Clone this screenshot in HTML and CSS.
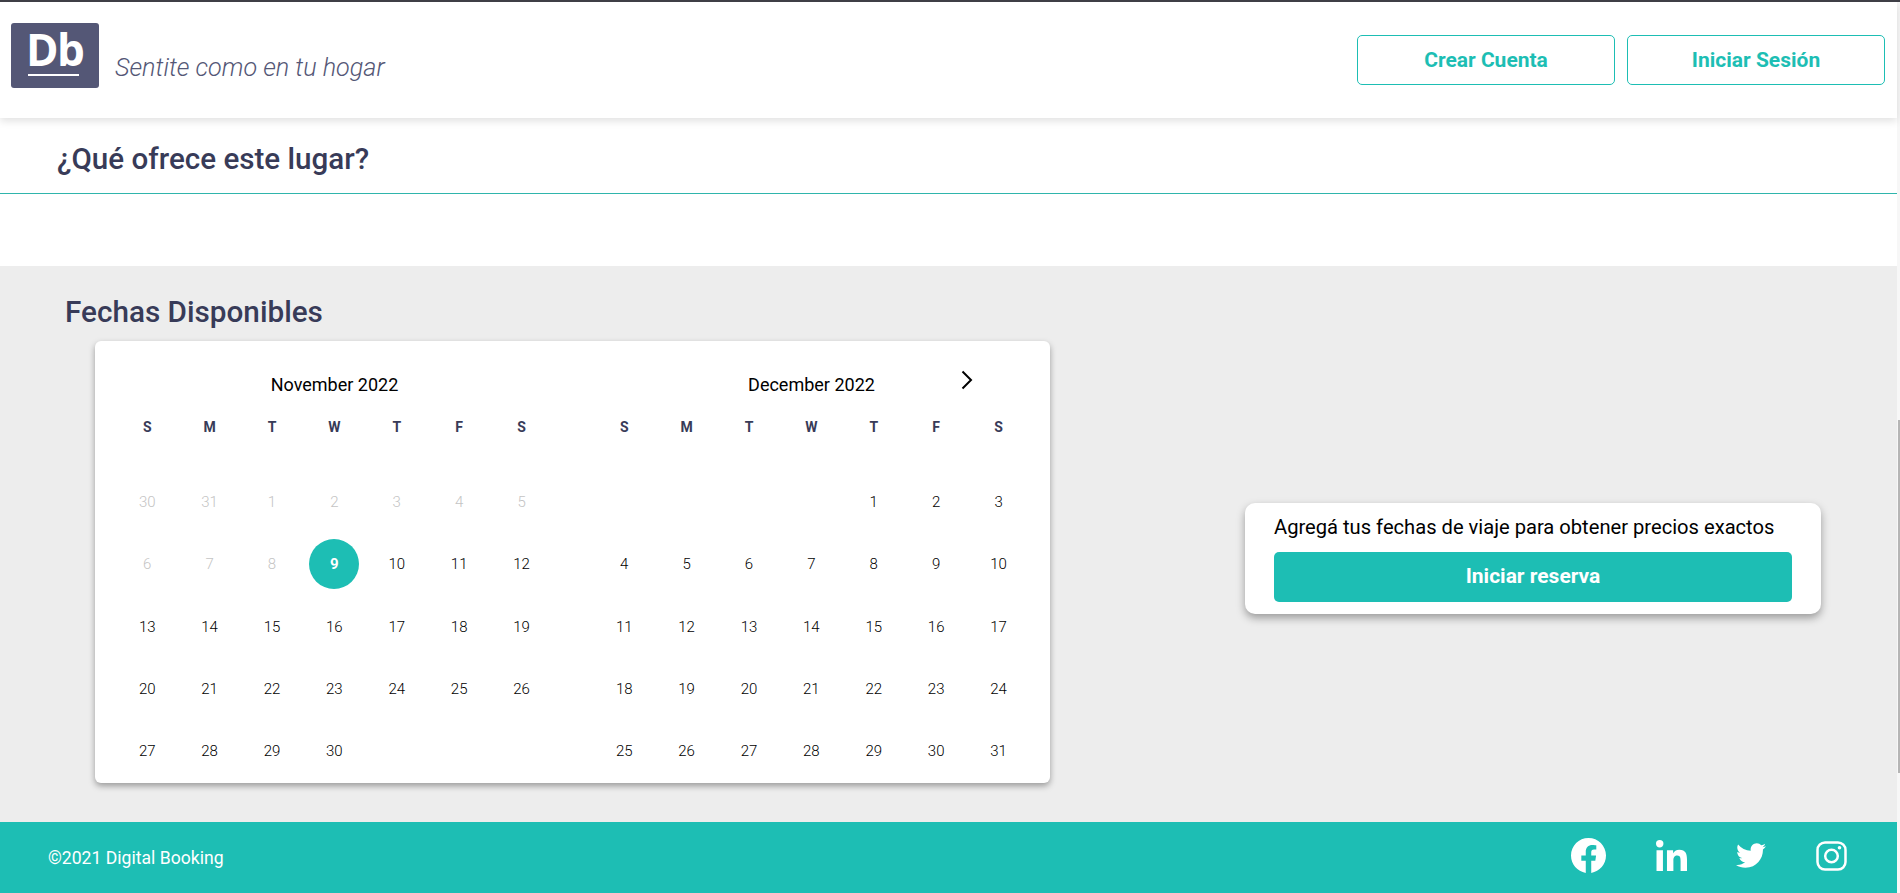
FILE: index.html
```html
<!DOCTYPE html>
<html lang="en">
<head>
    <meta charset="UTF-8">
    <meta name="viewport" content="width=device-width, initial-scale=1.0">
    <title>Digital Booking</title>
    <link rel="stylesheet" href="styles.css">
</head>
<body>
    <div class="page">
        <div class="content">
            <header class="header">
                <div class="brand">
                    <div class="logo"><span class="logo-text">Db</span></div>
                    <span class="tagline">Sentite como en tu hogar</span>
                </div>
                <div class="header-buttons">
                    <button type="button" class="btn-outline">Crear Cuenta</button>
                    <button type="button" class="btn-outline">Iniciar Sesión</button>
                </div>
            </header>

            <section class="features">
                <h2 class="features-title">¿Qué ofrece este lugar?</h2>
                <div class="features-body"></div>
            </section>

            <section class="dates">
                <h2 class="dates-title">Fechas Disponibles</h2>
                <div class="dates-row">
                    <div class="calendar">
                        <svg class="next-month" viewBox="0 0 12 20" aria-hidden="true"><path d="M1.500 1.500 10 10l-8.500 8.500" /></svg>
                        <div class="month">
                            <div class="month-name">November 2022</div>
                            <div class="week-days">
                                <span>S</span><span>M</span><span>T</span><span>W</span><span>T</span><span>F</span><span>S</span>
                            </div>
                            <div class="days">
                                <span class="off">30</span><span class="off">31</span><span class="off">1</span><span class="off">2</span><span class="off">3</span><span class="off">4</span><span class="off">5</span>
                                <span class="off">6</span><span class="off">7</span><span class="off">8</span><span class="today">9</span><span>10</span><span>11</span><span>12</span>
                                <span>13</span><span>14</span><span>15</span><span>16</span><span>17</span><span>18</span><span>19</span>
                                <span>20</span><span>21</span><span>22</span><span>23</span><span>24</span><span>25</span><span>26</span>
                                <span>27</span><span>28</span><span>29</span><span>30</span><span></span><span></span><span></span>
                            </div>
                        </div>
                        <div class="month">
                            <div class="month-name">December 2022</div>
                            <div class="week-days">
                                <span>S</span><span>M</span><span>T</span><span>W</span><span>T</span><span>F</span><span>S</span>
                            </div>
                            <div class="days">
                                <span></span><span></span><span></span><span></span><span>1</span><span>2</span><span>3</span>
                                <span>4</span><span>5</span><span>6</span><span>7</span><span>8</span><span>9</span><span>10</span>
                                <span>11</span><span>12</span><span>13</span><span>14</span><span>15</span><span>16</span><span>17</span>
                                <span>18</span><span>19</span><span>20</span><span>21</span><span>22</span><span>23</span><span>24</span>
                                <span>25</span><span>26</span><span>27</span><span>28</span><span>29</span><span>30</span><span>31</span>
                            </div>
                        </div>
                    </div>
                    <div class="booking">
                        <p class="booking-text">Agregá tus fechas de viaje para obtener precios exactos</p>
                        <button type="button" class="btn-solid">Iniciar reserva</button>
                    </div>
                </div>
            </section>

            <footer class="footer">
                <span class="copyright">©2021 Digital Booking</span>
                <div class="social">
                    <svg class="icon-facebook" viewBox="8 8 496 493" aria-hidden="true"><path d="M504 256C504 119 393 8 256 8S8 119 8 256c0 123.78 90.69 226.38 209.25 245V327.69h-63V256h63v-54.64c0-62.15 37-96.48 93.67-96.48 27.14 0 55.52 4.84 55.52 4.84v61h-31.28c-30.8 0-40.41 19.12-40.41 38.73V256h68.78l-11 71.69h-57.78V501C413.31 482.38 504 379.78 504 256z" /></svg>
                    <svg class="icon-linkedin" viewBox="0 0 448 448" aria-hidden="true"><path d="M100.28 448H7.4V148.9h92.88zM53.79 108.1C24.09 108.1 0 83.5 0 53.8a53.79 53.79 0 0 1 107.58 0c0 29.7-24.1 54.3-53.79 54.3zM447.9 448h-92.68V302.4c0-34.7-.7-79.2-48.29-79.2-48.29 0-55.69 37.7-55.69 76.7V448h-92.78V148.9h89.08v40.8h1.3c12.4-23.5 42.69-48.3 87.88-48.3 94 0 111.28 61.9 111.28 142.3V448z" /></svg>
                    <svg class="icon-twitter" viewBox="0 48 512 416" aria-hidden="true"><path d="M459.37 151.716c.325 4.548.325 9.097.325 13.645 0 138.72-105.583 298.558-298.558 298.558-59.452 0-114.68-17.219-161.137-47.106 8.447.974 16.568 1.299 25.34 1.299 49.055 0 94.213-16.568 130.274-44.832-46.132-.975-84.792-31.188-98.112-72.772 6.498.974 12.995 1.624 19.818 1.624 9.421 0 18.843-1.3 27.614-3.573-48.081-9.747-84.143-51.98-84.143-102.985v-1.299c13.969 7.797 30.214 12.67 47.431 13.319-28.264-18.843-46.781-51.005-46.781-87.391 0-19.492 5.197-37.36 14.294-52.954 51.655 63.675 129.3 105.258 216.365 109.807-1.624-7.797-2.599-15.918-2.599-24.04 0-57.828 46.782-104.934 104.934-104.934 30.213 0 57.502 12.67 76.67 33.137 23.715-4.548 46.456-13.32 66.599-25.34-7.798 24.366-24.366 44.833-46.132 57.827 21.117-2.273 41.584-8.122 60.426-16.243-14.292 20.791-32.161 39.308-52.628 54.253z" /></svg>
                    <svg class="icon-instagram" viewBox="0 0 31 30" aria-hidden="true"><rect x="1.500" y="1.500" width="28" height="27" rx="7.500" /><circle cx="15.500" cy="15" r="6.300" /><circle class="dot" cx="23.500" cy="6.800" r="1.800" /></svg>
                </div>
            </footer>
        </div>
        <div class="scrollbar"><div class="scrollbar-thumb"></div></div>
    </div>
</body>
</html>
```

FILE: styles.css
```css
* {
    box-sizing: border-box;
}

html, body {
    margin: 0;
    height: 100%;
    overflow: hidden;
}

body {
    font-family: Roboto, Arial, sans-serif;
    background-color: #fff;
    border-top: 2px solid #3f3f46;
}

.page {
    display: flex;
    height: 891px;
}

.content {
    flex: 1;
    min-width: 0;
    display: flex;
    flex-direction: column;
}

.scrollbar {
    width: 3px;
    background-color: #f7f7f7;
    padding-left: 1px;
}

.scrollbar-thumb {
    margin-top: 418px;
    height: 353px;
    background-color: #b5b5b5;
}

/* header */
.header {
    position: relative;
    height: 116px;
    padding: 21px 12px 0 11px;
    display: flex;
    justify-content: space-between;
    align-items: flex-start;
    background-color: #fff;
    box-shadow: 0 3px 8px rgba(0, 0, 0, 0.12);
}

.brand {
    display: flex;
    align-items: flex-end;
    gap: 16px;
}

.logo {
    width: 88px;
    height: 65px;
    padding: 0 0 0 17px;
    background-color: #545776;
    border-radius: 3px;
}

.logo-text {
    display: inline-block;
    width: 51px;
    height: 53px;
    color: #fff;
    font-family: "Open Sans", sans-serif;
    font-size: 44px;
    font-weight: 700;
    line-height: 52px;
    letter-spacing: -1.500px;
    text-indent: -2px;
    white-space: nowrap;
    border-bottom: 2px solid #fff;
}

.tagline {
    margin-bottom: 2px;
    color: #545776;
    font-size: 25.200px;
    font-weight: 300;
    font-style: italic;
    line-height: 36px;
}

.header-buttons {
    display: flex;
    gap: 12px;
    margin-top: 12px;
}

.btn-outline {
    width: 258px;
    height: 50px;
    padding: 0;
    background-color: #fff;
    color: #1dbeb4;
    border: 1px solid #1dbeb4;
    border-radius: 5px;
    font-family: Roboto, Arial, sans-serif;
    font-size: 21px;
    font-weight: 700;
    cursor: pointer;
}

/* que ofrece */
.features-title {
    margin: 0;
    height: 76px;
    padding-left: 57px;
    color: #383b58;
    font-size: 29.600px;
    font-weight: 500;
    line-height: 82px;
    border-bottom: 1px solid #2fb5ac;
}

.features-body {
    height: 72px;
}

/* fechas */
.dates {
    height: 556px;
    padding: 26px 0 0 65px;
    background-color: #ededed;
}

.dates-title {
    margin: 0;
    height: 49px;
    color: #383b58;
    font-size: 29.700px;
    font-weight: 500;
    line-height: 40px;
}

.dates-row {
    display: flex;
    align-items: flex-start;
    padding-left: 30px;
}

.calendar {
    position: relative;
    width: 955px;
    height: 442px;
    padding: 30px 20px 0 21px;
    display: flex;
    gap: 40px;
    background-color: #fff;
    border-radius: 6px;
    box-shadow: 0 3px 6px rgba(0, 0, 0, 0.35);
}

.next-month {
    position: absolute;
    top: 29px;
    left: 866px;
    width: 12px;
    height: 20px;
    fill: none;
    stroke: #000;
    stroke-width: 2;
}

.month {
    width: 437px;
}

.month-name {
    height: 28px;
    color: #000;
    text-align: center;
    font-family: Roboto, Arial, sans-serif;
    font-size: 18px;
    font-weight: 400;
    line-height: 28px;
}

.week-days, .days {
    display: grid;
    grid-template-columns: repeat(7, 62.4px);
    justify-items: center;
    align-items: center;
    text-align: center;
}

.week-days {
    height: 28px;
    margin-top: 14px;
    color: #383b58;
    font-size: 14px;
    font-weight: 700;
}

.days {
    grid-auto-rows: 62.3px;
    margin-top: 30px;
    color: #000;
    font-size: 15px;
    font-weight: 300;
}

.days .off {
    color: #c4c4c4;
}

.days .today {
    width: 50px;
    height: 50px;
    line-height: 50px;
    background-color: #1dbeb4;
    border-radius: 50%;
    color: #fff;
    font-weight: 700;
}

.booking {
    width: 576px;
    height: 111px;
    margin: 162px 0 0 195px;
    padding: 10px 29px 0;
    background-color: #fff;
    border-radius: 10px;
    box-shadow: 0 4px 8px rgba(0, 0, 0, 0.35);
}

.booking-text {
    margin: 0 0 11px;
    color: #000;
    font-size: 20.150px;
    line-height: 28px;
    white-space: nowrap;
}

.btn-solid {
    display: block;
    width: 100%;
    height: 50px;
    padding: 0 0 2px;
    background-color: #1dbeb4;
    color: #fff;
    border: none;
    border-radius: 5px;
    font-family: Roboto, Arial, sans-serif;
    font-size: 21px;
    font-weight: 700;
    cursor: pointer;
}

/* footer */
.footer {
    height: 71px;
    padding: 0 50px 0 48px;
    display: flex;
    justify-content: space-between;
    align-items: center;
    background-color: #1dbeb4;
}

.copyright {
    color: #fff;
    font-size: 17.600px;
}

.social {
    display: flex;
    align-items: center;
    margin-top: -4px;
    fill: #fff;
}

.icon-facebook {
    width: 35px;
    height: 35px;
}

.icon-linkedin {
    width: 31px;
    height: 31px;
    margin-left: 50px;
}

.icon-twitter {
    width: 30px;
    height: 27px;
    margin-left: 49px;
}

.icon-instagram {
    width: 31px;
    height: 30px;
    margin-left: 50px;
    fill: none;
    stroke: #fff;
    stroke-width: 2.500;
}

.icon-instagram .dot {
    fill: #fff;
    stroke: none;
}
```
